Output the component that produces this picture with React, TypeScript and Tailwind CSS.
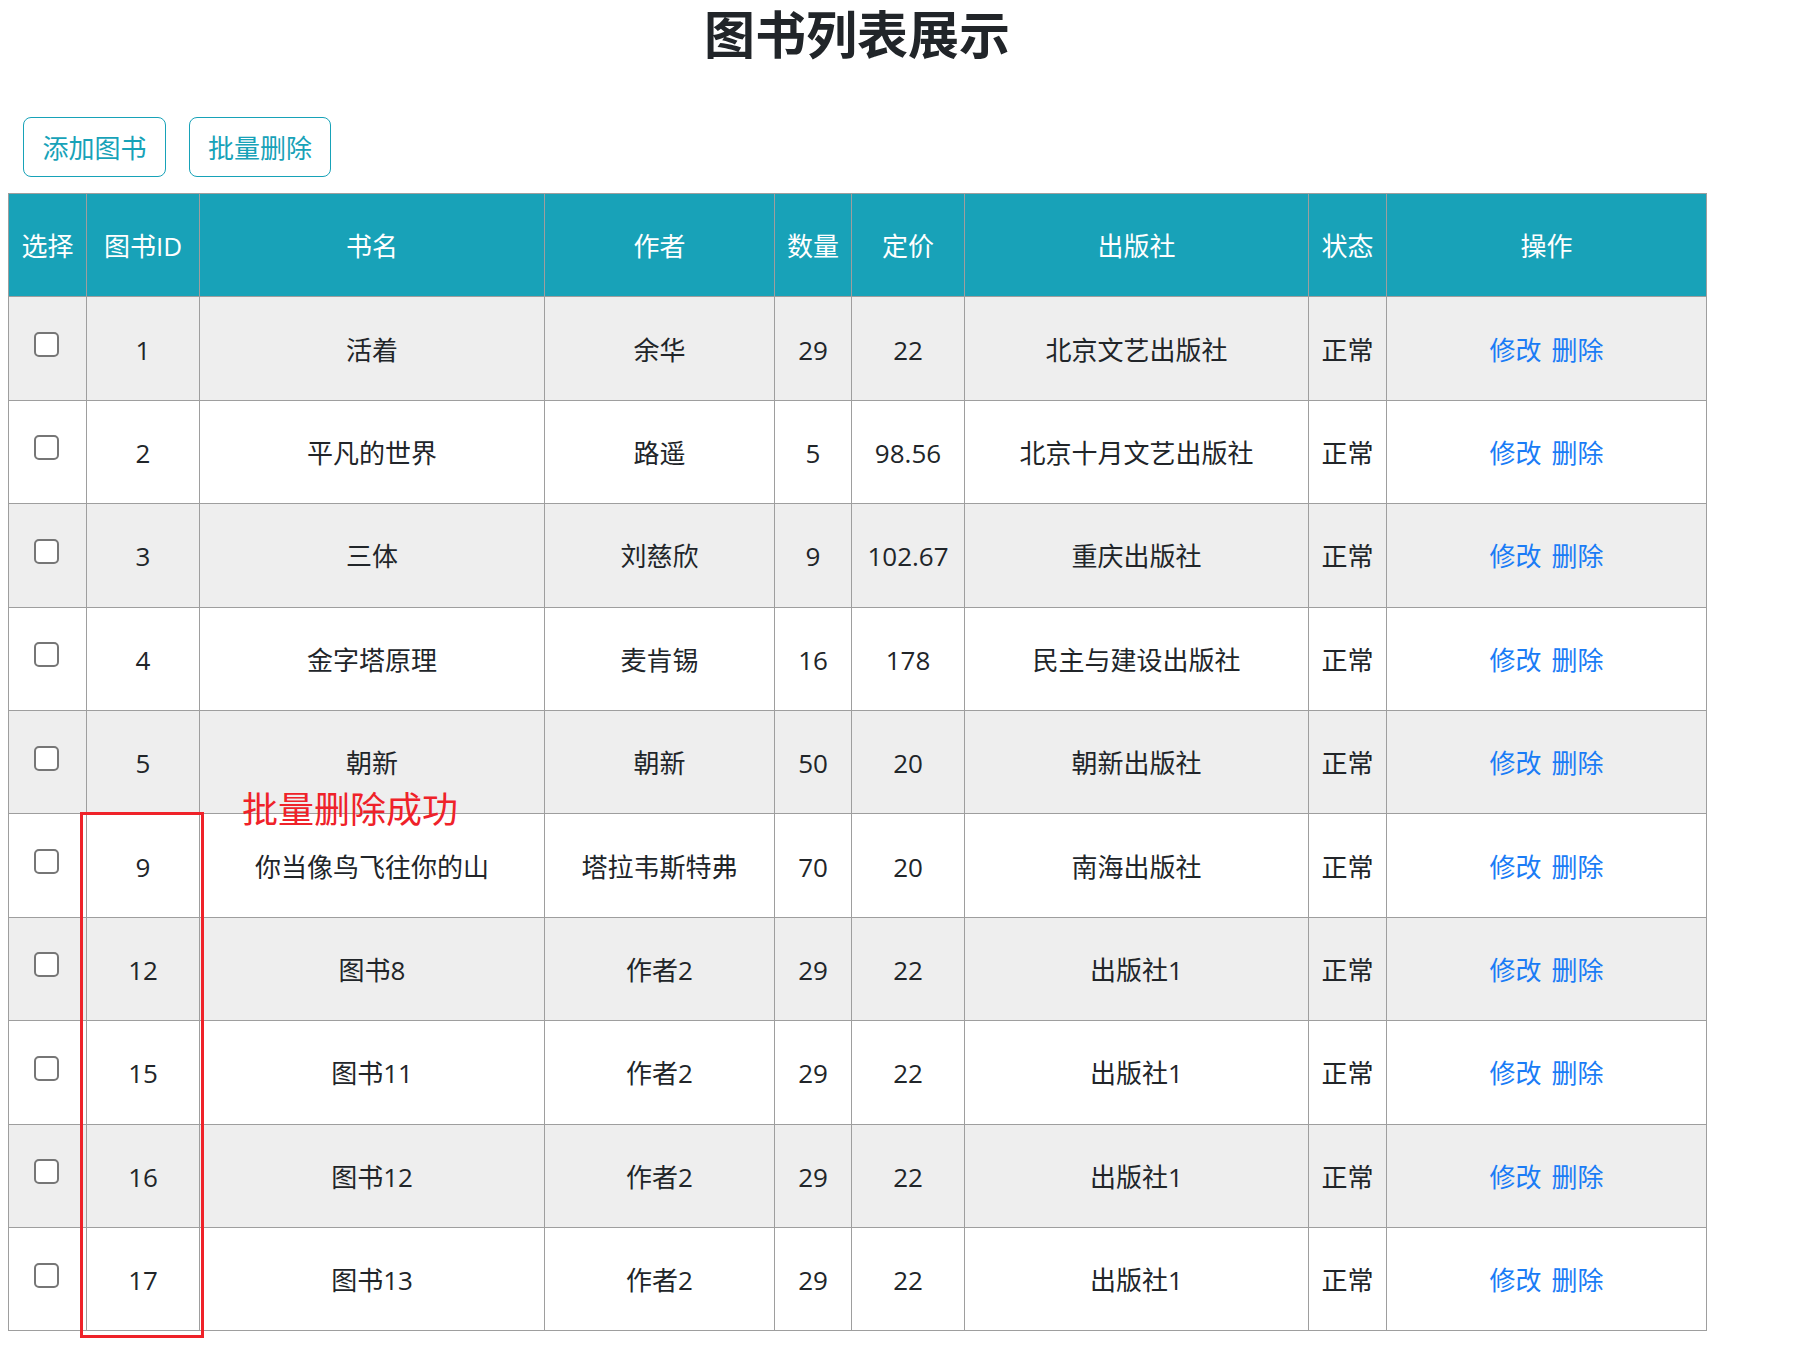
import React from "react";

type Book = {
  id: number;
  name: string;
  author: string;
  count: number;
  price: string;
  publisher: string;
};

const books: Book[] = [
  { id: 1, name: "活着", author: "余华", count: 29, price: "22", publisher: "北京文艺出版社" },
  { id: 2, name: "平凡的世界", author: "路遥", count: 5, price: "98.56", publisher: "北京十月文艺出版社" },
  { id: 3, name: "三体", author: "刘慈欣", count: 9, price: "102.67", publisher: "重庆出版社" },
  { id: 4, name: "金字塔原理", author: "麦肯锡", count: 16, price: "178", publisher: "民主与建设出版社" },
  { id: 5, name: "朝新", author: "朝新", count: 50, price: "20", publisher: "朝新出版社" },
  { id: 9, name: "你当像鸟飞往你的山", author: "塔拉韦斯特弗", count: 70, price: "20", publisher: "南海出版社" },
  { id: 12, name: "图书8", author: "作者2", count: 29, price: "22", publisher: "出版社1" },
  { id: 15, name: "图书11", author: "作者2", count: 29, price: "22", publisher: "出版社1" },
  { id: 16, name: "图书12", author: "作者2", count: 29, price: "22", publisher: "出版社1" },
  { id: 17, name: "图书13", author: "作者2", count: 29, price: "22", publisher: "出版社1" },
];

const headers = ["选择", "图书ID", "书名", "作者", "数量", "定价", "出版社", "状态", "操作"];

const cell = "border border-[#9e9e9e] p-0 pt-[3px] text-center";

export default function App() {
  return (
    <div
      className="relative min-h-[1351px] bg-white pl-[8px] text-[#212529]"
      style={{ fontFamily: '"Open Sans", "Noto Sans CJK SC", sans-serif' }}
    >
      <div className="w-[1698px]">
        <h1 className="pt-[9px] text-center text-[51px] font-bold leading-[51px] text-[#212529]">
          图书列表展示
        </h1>

        <div className="mt-[57px] ml-[15px] flex gap-[23px]">
          <button className="h-[60px] w-[143px] rounded-[8px] border border-[#17a2b8] bg-white pt-[2px] text-[26px] leading-none text-[#17a2b8]">
            添加图书
          </button>
          <button className="h-[60px] w-[142px] rounded-[8px] border border-[#17a2b8] bg-white pt-[2px] text-[26px] leading-none text-[#17a2b8]">
            批量删除
          </button>
        </div>

        <table className="mt-[16px] w-[1698px] table-fixed border-collapse border border-[#9e9e9e] text-[26px]">
          <colgroup>
            <col className="w-[78px]" />
            <col className="w-[113px]" />
            <col className="w-[345px]" />
            <col className="w-[230px]" />
            <col className="w-[77px]" />
            <col className="w-[113px]" />
            <col className="w-[344px]" />
            <col className="w-[78px]" />
            <col className="w-[320px]" />
          </colgroup>
          <thead>
            <tr className="h-[103.4px] bg-[#18a2b8] text-white">
              {headers.map((h) => (
                <th key={h} className="border border-[#9e9e9e] p-0 pt-[3px] text-center font-normal">
                  {h}
                </th>
              ))}
            </tr>
          </thead>
          <tbody>
            {books.map((b, i) => (
              <tr key={b.id} className={i % 2 === 0 ? "h-[103.4px] bg-[#eeeeee]" : "h-[103.4px] bg-white"}>
                <td className="border border-[#9e9e9e] p-0">
                  <div className="flex items-center justify-center pb-[8px] pr-[3px]">
                    <span className="block h-[25px] w-[25px] rounded-[5px] border-2 border-[#767676] bg-white" />
                  </div>
                </td>
                <td className={cell}>{b.id}</td>
                <td className={cell}>{b.name}</td>
                <td className={cell}>{b.author}</td>
                <td className={cell}>{b.count}</td>
                <td className={cell}>{b.price}</td>
                <td className={cell}>{b.publisher}</td>
                <td className={cell}>正常</td>
                <td className={cell + " text-[#1a7cf6]"}>
                  <span className="inline-flex gap-[10px]">
                    <a className="cursor-pointer">修改</a>
                    <a className="cursor-pointer">删除</a>
                  </span>
                </td>
              </tr>
            ))}
          </tbody>
        </table>
      </div>

      <div className="absolute left-[242px] top-[792px] text-[36px] leading-none text-[#ef2229]">
        批量删除成功
      </div>
      <div className="absolute left-[80px] top-[812px] h-[526px] w-[124px] border-[3px] border-[#ef2229]" />
    </div>
  );
}
